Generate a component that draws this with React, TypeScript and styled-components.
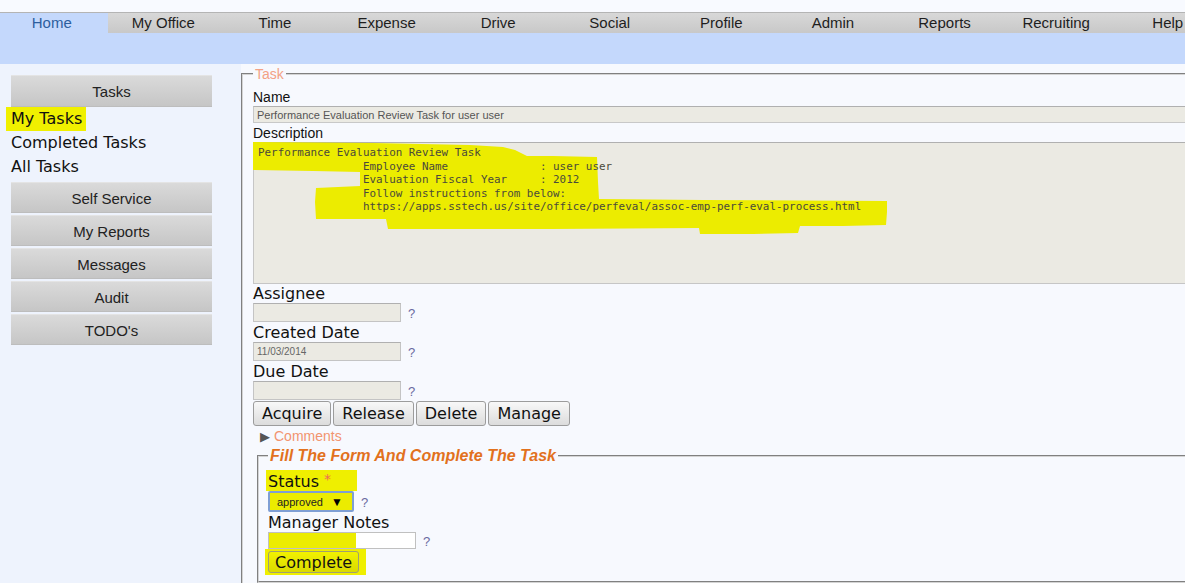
import React from 'react';
import styled, { createGlobalStyle } from 'styled-components';

const GlobalStyle = createGlobalStyle`
  html, body { margin: 0; padding: 0; background: #f7f9fe; overflow: hidden; }
  #root { width: 1185px; height: 583px; overflow: hidden; }
`;

const Page = styled.div`
  width: 1185px;
  height: 583px;
  display: flex;
  flex-direction: column;
  background: #f7f9fe;
  font-family: "Liberation Sans", Arial, sans-serif;
  overflow: hidden;
`;

const TopGap = styled.div`
  height: 12px;
  background: #f8faff;
`;

const Nav = styled.nav`
  display: flex;
  height: 20px;
  margin-left: -4px;
  border-top: 1px solid #b4b4b4;
`;

const Tab = styled.div<{ $active?: boolean }>`
  flex: 0 0 111.6px;
  text-align: center;
  font-size: 15px;
  line-height: 20px;
  white-space: nowrap;
  color: ${(p) => (p.$active ? '#2d5e9e' : '#1e1e1e')};
  background: ${(p) => (p.$active ? '#c4d8fc' : 'linear-gradient(#d8d8d8, #c8c8c8)')};
`;

const Band = styled.div`
  height: 31px;
  background: #c4d8fc;
`;

const Body = styled.div`
  flex: 1;
  display: flex;
  min-height: 0;
`;

const Sidebar = styled.aside`
  flex: 0 0 241px;
  box-sizing: border-box;
  background: #eef3fd;
  padding: 11px 0 0 11px;
  display: flex;
  flex-direction: column;
  align-items: flex-start;
`;

const SideButton = styled.div<{ $tall?: boolean }>`
  width: 201px;
  height: ${(p) => (p.$tall ? 32 : 31)}px;
  box-sizing: border-box;
  margin-bottom: ${(p) => (p.$tall ? 0 : 2)}px;
  border-top: 1px solid #e4e4e4;
  border-bottom: 1px solid #bdbdbd;
  background: linear-gradient(#dadada, #c6c6c6);
  color: #222;
  font-size: 15px;
  line-height: 30px;
  padding-top: 1px;
  text-align: center;
`;

const LinkList = styled.div`
  display: flex;
  flex-direction: column;
  align-items: flex-start;
  margin-bottom: 3px;
`;

const SideLink = styled.div<{ $marked?: boolean }>`
  font-family: "DejaVu Sans", Verdana, sans-serif;
  font-size: 16px;
  line-height: 24px;
  color: #111;
  padding: 0 4px 0 5px;
  margin-left: -5px;
  background: ${(p) => (p.$marked ? '#f0f000' : 'transparent')};
`;

const Main = styled.main`
  flex: 1;
  margin-right: -40px;
  padding-top: 2px;
  overflow: hidden;
`;

const OuterSet = styled.fieldset`
  margin: 0;
  min-width: 0;
  border: 2px groove #d4d4d4;
  border-right: none;
  border-bottom: none;
  padding: 7px 0 0 10px;
  height: 600px;
  box-sizing: border-box;
`;

const TaskLegend = styled.legend`
  font-size: 14px;
  line-height: 16px;
  color: #f3a185;
  padding: 0 2px;
`;

const SmallLabel = styled.div`
  font-size: 14px;
  line-height: 17px;
  color: #111;
`;

const WideInput = styled.input`
  display: block;
  width: 100%;
  height: 17px;
  box-sizing: border-box;
  margin: 0 0 2px;
  background: #ebeae3;
  border: 1px solid #c8c8c8;
  border-top-color: #b0b0b0;
  font-family: "Liberation Sans", Arial, sans-serif;
  font-size: 11px;
  color: #555;
  padding: 0 3px;
  outline: none;
`;

const AreaBox = styled.div`
  position: relative;
  height: 142px;
  box-sizing: border-box;
  background: #ebeae3;
  border: 1px solid #c6c6c6;
  border-top-color: #b0b0b0;
`;

const Marker = styled.svg`
  position: absolute;
  left: -1px;
  top: -1px;
  pointer-events: none;
`;

const Area = styled.textarea`
  position: relative;
  display: block;
  width: 100%;
  height: 100%;
  box-sizing: border-box;
  margin: 0;
  background: transparent;
  border: none;
  resize: none;
  outline: none;
  overflow: hidden;
  padding: 3px 4px;
  font-family: "DejaVu Sans Mono", "Liberation Mono", monospace;
  font-size: 10.9px;
  line-height: 13.5px;
  color: #4a4a3a;
  white-space: pre;
`;

const BigLabel = styled.div`
  font-family: "DejaVu Sans", Verdana, sans-serif;
  font-size: 16px;
  line-height: 19px;
  color: #111;
`;

const FieldRow = styled.div`
  display: flex;
  align-items: center;
  margin-bottom: 1px;
`;

const ShortInput = styled.input`
  width: 148px;
  height: 19px;
  box-sizing: border-box;
  margin: 0;
  background: #ebeae3;
  border: 1px solid #c4c4c4;
  border-top-color: #b0b0b0;
  font-family: "Liberation Sans", Arial, sans-serif;
  font-size: 10px;
  color: #666;
  padding: 0 3px;
  outline: none;
`;

const Help = styled.span`
  margin-left: 7px;
  font-family: "Liberation Sans", Arial, sans-serif;
  font-size: 13px;
  line-height: 13px;
  color: #6a6aa0;
  padding-top: 1px;
`;

const ButtonRow = styled.div`
  display: flex;
  gap: 2px;
`;

const ActionButton = styled.button`
  height: 25px;
  box-sizing: border-box;
  margin: 0;
  padding: 0 8px;
  border: 1px solid #9c9c9c;
  border-radius: 3px;
  background: linear-gradient(#f8f8f8, #dcdcdc);
  font-family: "DejaVu Sans", Verdana, sans-serif;
  font-size: 16px;
  line-height: 22px;
  color: #111;
`;

const Toggle = styled.div`
  display: flex;
  align-items: center;
  height: 18px;
  margin: 1px 0 0 7px;
`;

const Arrow = styled.span`
  font-size: 13px;
  line-height: 13px;
  color: #555;
`;

const ToggleText = styled.span`
  margin-left: 4px;
  font-size: 14px;
  color: #f2946f;
`;

const InnerSet = styled.fieldset`
  margin: 2px 0 0 4px;
  min-width: 0;
  border: 2px groove #d4d4d4;
  border-right: none;
  padding: 5px 0 6px 9px;
`;

const FormLegend = styled.legend`
  font-size: 16px;
  line-height: 18px;
  font-weight: bold;
  font-style: italic;
  color: #e2711d;
  padding: 0 2px;
`;

const MarkedLabel = styled(BigLabel)`
  display: inline-block;
  width: 89px;
  margin-left: -2px;
  padding-left: 2px;
  height: 21px;
  background: #efef00;
`;

const Star = styled.span`
  color: #f06a55;
  font-size: 14px;
  vertical-align: 3px;
  margin-left: 5px;
`;

const SelectBox = styled.div`
  display: flex;
  align-items: center;
  justify-content: space-between;
  width: 86px;
  height: 21px;
  box-sizing: border-box;
  padding: 0 9px 0 7px;
  border: 2px solid #7f9fd4;
  border-radius: 2px;
  background: #ecec00;
  font-size: 11px;
  color: #222;
`;

const Caret = styled.span`
  font-size: 12px;
  color: #000;
`;

const NotesInput = styled.input`
  width: 148px;
  height: 17px;
  box-sizing: border-box;
  margin: 0;
  padding: 0 3px;
  border: 1px solid #c0c0c0;
  background: linear-gradient(90deg, #ecec00 0 87px, #fff 87px);
  outline: none;
`;

const MarkWrap = styled.div`
  display: inline-flex;
  margin: -1px 0 0 -3px;
  padding: 2px 7px 2px 3px;
  background: #efef00;
`;

const CompleteButton = styled(ActionButton)`
  height: 22px;
  padding: 0 6px;
  line-height: 19px;
  background: linear-gradient(#f2f200, #dada00);
  border-color: #a0a070;
`;

const tabs = ['Home', 'My Office', 'Time', 'Expense', 'Drive', 'Social', 'Profile', 'Admin', 'Reports', 'Recruiting', 'Help'];

const description = `Performance Evaluation Review Task
                Employee Name              : user user
                Evaluation Fiscal Year     : 2012
                Follow instructions from below:
                https://apps.sstech.us/site/office/perfeval/assoc-emp-perf-eval-process.html`;

const blob =
  '0,0 120,1 217,3 250,5 262,8 274,14 300,14 344,15 345,40 346,57 450,58 634,59 634,70 633,83 590,84 547,84 545,91 500,92 447,92 446,86 300,87 135,87 133,77 63,77 62,60 63,46 107,44 107,30 60,29 0,28';

export default function App() {
  return (
    <Page>
      <GlobalStyle />
      <TopGap />
      <Nav>
        {tabs.map((t, i) => (
          <Tab key={t} $active={i === 0}>
            {t}
          </Tab>
        ))}
      </Nav>
      <Band />
      <Body>
        <Sidebar>
          <SideButton $tall>Tasks</SideButton>
          <LinkList>
            <SideLink $marked>My Tasks</SideLink>
            <SideLink>Completed Tasks</SideLink>
            <SideLink>All Tasks</SideLink>
          </LinkList>
          <SideButton>Self Service</SideButton>
          <SideButton>My Reports</SideButton>
          <SideButton>Messages</SideButton>
          <SideButton>Audit</SideButton>
          <SideButton>TODO's</SideButton>
        </Sidebar>
        <Main>
          <OuterSet>
            <TaskLegend>Task</TaskLegend>
            <SmallLabel>Name</SmallLabel>
            <WideInput readOnly value="Performance Evaluation Review Task for user user" />
            <SmallLabel>Description</SmallLabel>
            <AreaBox>
              <Marker width="700" height="100">
                <polygon points={blob} fill="#ecec00" />
              </Marker>
              <Area readOnly value={description} />
            </AreaBox>
            <BigLabel>Assignee</BigLabel>
            <FieldRow>
              <ShortInput readOnly value="" />
              <Help>?</Help>
            </FieldRow>
            <BigLabel>Created Date</BigLabel>
            <FieldRow>
              <ShortInput readOnly value="11/03/2014" />
              <Help>?</Help>
            </FieldRow>
            <BigLabel>Due Date</BigLabel>
            <FieldRow>
              <ShortInput readOnly value="" />
              <Help>?</Help>
            </FieldRow>
            <ButtonRow>
              <ActionButton>Acquire</ActionButton>
              <ActionButton>Release</ActionButton>
              <ActionButton>Delete</ActionButton>
              <ActionButton>Manage</ActionButton>
            </ButtonRow>
            <Toggle>
              <Arrow>▶</Arrow>
              <ToggleText>Comments</ToggleText>
            </Toggle>
            <InnerSet>
              <FormLegend>Fill The Form And Complete The Task</FormLegend>
              <MarkedLabel>
                Status<Star>*</Star>
              </MarkedLabel>
              <FieldRow>
                <SelectBox>
                  <span>approved</span>
                  <Caret>▼</Caret>
                </SelectBox>
                <Help>?</Help>
              </FieldRow>
              <BigLabel>Manager Notes</BigLabel>
              <FieldRow>
                <NotesInput />
                <Help>?</Help>
              </FieldRow>
              <MarkWrap>
                <CompleteButton>Complete</CompleteButton>
              </MarkWrap>
            </InnerSet>
          </OuterSet>
        </Main>
      </Body>
    </Page>
  );
}
